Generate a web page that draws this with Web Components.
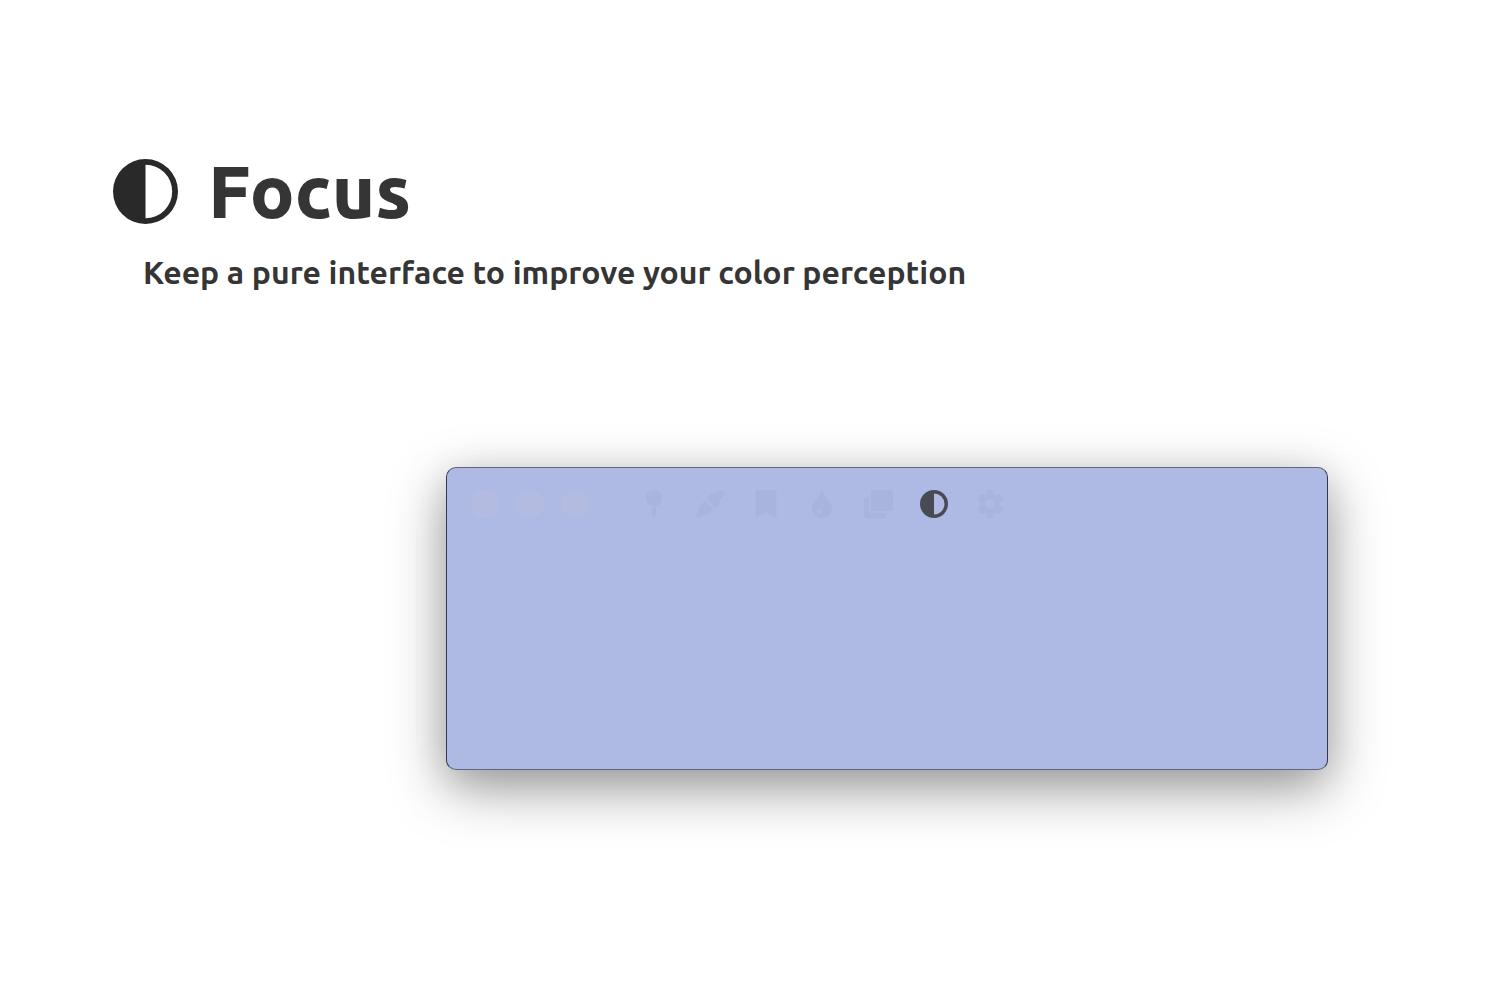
<!DOCTYPE html>
<html lang="en">
<head>
<meta charset="utf-8">
<title>Focus</title>
<style>
body { margin: 0; background: #fff; color: #353535; font-family: Ubuntu, "Noto Sans", "Open Sans", sans-serif; }
</style>
</head>
<body>
<feature-page>
  <feature-heading slot="heading">
    <span slot="title">Focus</span>
    <span slot="description">Keep a pure interface to improve your color perception</span>
  </feature-heading>
  <color-window></color-window>
</feature-page>
<script>
const icons = {
  pin: '<path fill-rule="evenodd" d="M14 0a8 8 0 1 1 0 16a8 8 0 0 1 0-16zM9 7.500c0-3 1.800-4.500 4.500-4.900c.8-.1.800-1.100 0-1.100C10 1.800 7.900 4.200 7.900 7.500c0 .8 1.100.8 1.100 0z"/><path d="M12 17.200q2 .4 4 0V25L14 28.500L12 25z"/>',
  dropper: '<path d="M16 3.500l2.200 1.300L22.300.9c3.600-2.500 7.600 1.700 5 5l-4.600 4.700L24 13l-4.300 5.300L10 8.400z"/><path d="M8.800 10.800l8.500 8.500l-6.700 6.100H6.400L2 28.200L0 26l2.300-4v-4.200z"/>',
  bookmark: '<path d="M3.500 1.500Q3.500 0 5 0H23q1.500 0 1.500 1.500V28L14 22L3.500 28z"/>',
  drop: '<path fill-rule="evenodd" d="M14 0C16 7 24 11 24 19A10 9 0 0 1 4 19C4 11 12 7 14 0zM11 18.500c-2.600 2.600-1.700 5 .2 5.300c2.600.2 3.200-2.400-.2-5.300z"/>',
  layers: '<path d="M9.500 0H26.500Q29 0 29 2.500V18.500Q29 21 26.500 21H9.500Q7 21 7 18.500V2.500Q7 0 9.500 0z"/><path d="M0 10Q0 7.500 2.500 7.500H5V20q0 3 3 3H22v2.500Q22 28.500 19 28.500H3Q0 28.500 0 25.500z"/>',
  contrast: '<path fill-rule="evenodd" d="M14 0a14 14 0 1 1 0 28a14 14 0 0 1 0-28zM14 2.500v23a11.500 11.500 0 0 0 0-23z"/>',
  'contrast-bold': '<path fill-rule="evenodd" d="M14 0a14 14 0 1 1 0 28a14 14 0 0 1 0-28zM14 3.500v21a10.500 10.500 0 0 0 0-21z"/>',
  settings: '<path fill-rule="evenodd" d="M11.500 0h5l1 4.200l2 1.200L23.700 4L27 9.200L24 12.500v3L27 18.800L23.700 24l-4.200-1.400l-2 1.200l-1 4.200h-5l-1-4.200l-2-1.200L4.300 24L1 18.800L4 15.500v-3L1 9.200L4.300 4l4.200 1.400l2-1.200zM14 9.200a4.800 4.800 0 1 0 0 9.600a4.800 4.800 0 0 0 0-9.600z"/>'
};

class UiIcon extends HTMLElement {
  connectedCallback() {
    this.attachShadow({ mode: 'open' }).innerHTML = `
      <style>:host { display: block; width: 28px; height: 28px; } svg { display: block; width: 100%; height: 100%; overflow: visible; fill: currentColor; }</style>
      <svg viewBox="0 0 28 28" aria-hidden="true">${icons[this.getAttribute('name')]}</svg>`;
  }
}
customElements.define('ui-icon', UiIcon);

class FeatureHeading extends HTMLElement {
  connectedCallback() {
    this.attachShadow({ mode: 'open' }).innerHTML = `
      <style>
        :host { display: block; }
        .row { display: flex; align-items: center; gap: 30px; }
        ui-icon { width: 65px; height: 65px; color: #292929; flex: none; }
        h1 { margin: 0; font-size: 74px; line-height: 76px; font-weight: 800; }
        p { margin: 21px 0 0 30px; font-size: 32px; line-height: 44px; font-weight: 600; }
      </style>
      <div class="row"><ui-icon name="contrast"></ui-icon><h1><slot name="title"></slot></h1></div>
      <p><slot name="description"></slot></p>`;
  }
}
customElements.define('feature-heading', FeatureHeading);

class ColorWindow extends HTMLElement {
  connectedCallback() {
    const tools = [['pin', 'Pin window'], ['dropper', 'Pick color'], ['bookmark', 'Bookmark'], ['drop', 'Shading'], ['layers', 'Copy'], ['contrast-bold', 'Focus'], ['settings', 'Settings']];
    this.attachShadow({ mode: 'open' }).innerHTML = `
      <style>
        :host { display: block; box-sizing: border-box; min-height: 303px; padding: 22px 24px; border: 1px solid; border-color: #62677b #34384a; border-radius: 10px;
          background: #aebae4; box-shadow: 0 18px 56px rgba(0,0,0,.38), 0 8px 36px rgba(0,0,0,.1); }
        .bar, .controls, .tools { display: flex; align-items: center; }
        .bar { gap: 51px; }
        .controls { gap: 17px; }
        .tools { gap: 28px; }
        button { display: block; width: 28px; height: 28px; padding: 0; border: 0; background: none; color: #a8b4dc; cursor: pointer; }
        .controls button { border-radius: 50%; background: #b3bce0; }
        .tools button[aria-pressed] { color: #484b56; }
      </style>
      <div class="bar">
        <div class="controls">${['Close', 'Minimize', 'Maximize'].map(n => `<button type="button" aria-label="${n}"></button>`).join('')}</div>
        <div class="tools">${tools.map(([i, n]) => `<button type="button" aria-label="${n}"${n === 'Focus' ? ' aria-pressed="true"' : ''}><ui-icon name="${i}"></ui-icon></button>`).join('')}</div>
      </div>`;
  }
}
customElements.define('color-window', ColorWindow);

class FeaturePage extends HTMLElement {
  connectedCallback() {
    this.attachShadow({ mode: 'open' }).innerHTML = `
      <style>
        :host { display: block; box-sizing: border-box; min-height: 100vh; padding: 153px 182px 120px 113px; }
        main { display: flex; flex-direction: column; gap: 173px; }
        .stage { padding-left: 333px; }
      </style>
      <main><slot name="heading"></slot><div class="stage"><slot></slot></div></main>`;
  }
}
customElements.define('feature-page', FeaturePage);
</script>
</body>
</html>
